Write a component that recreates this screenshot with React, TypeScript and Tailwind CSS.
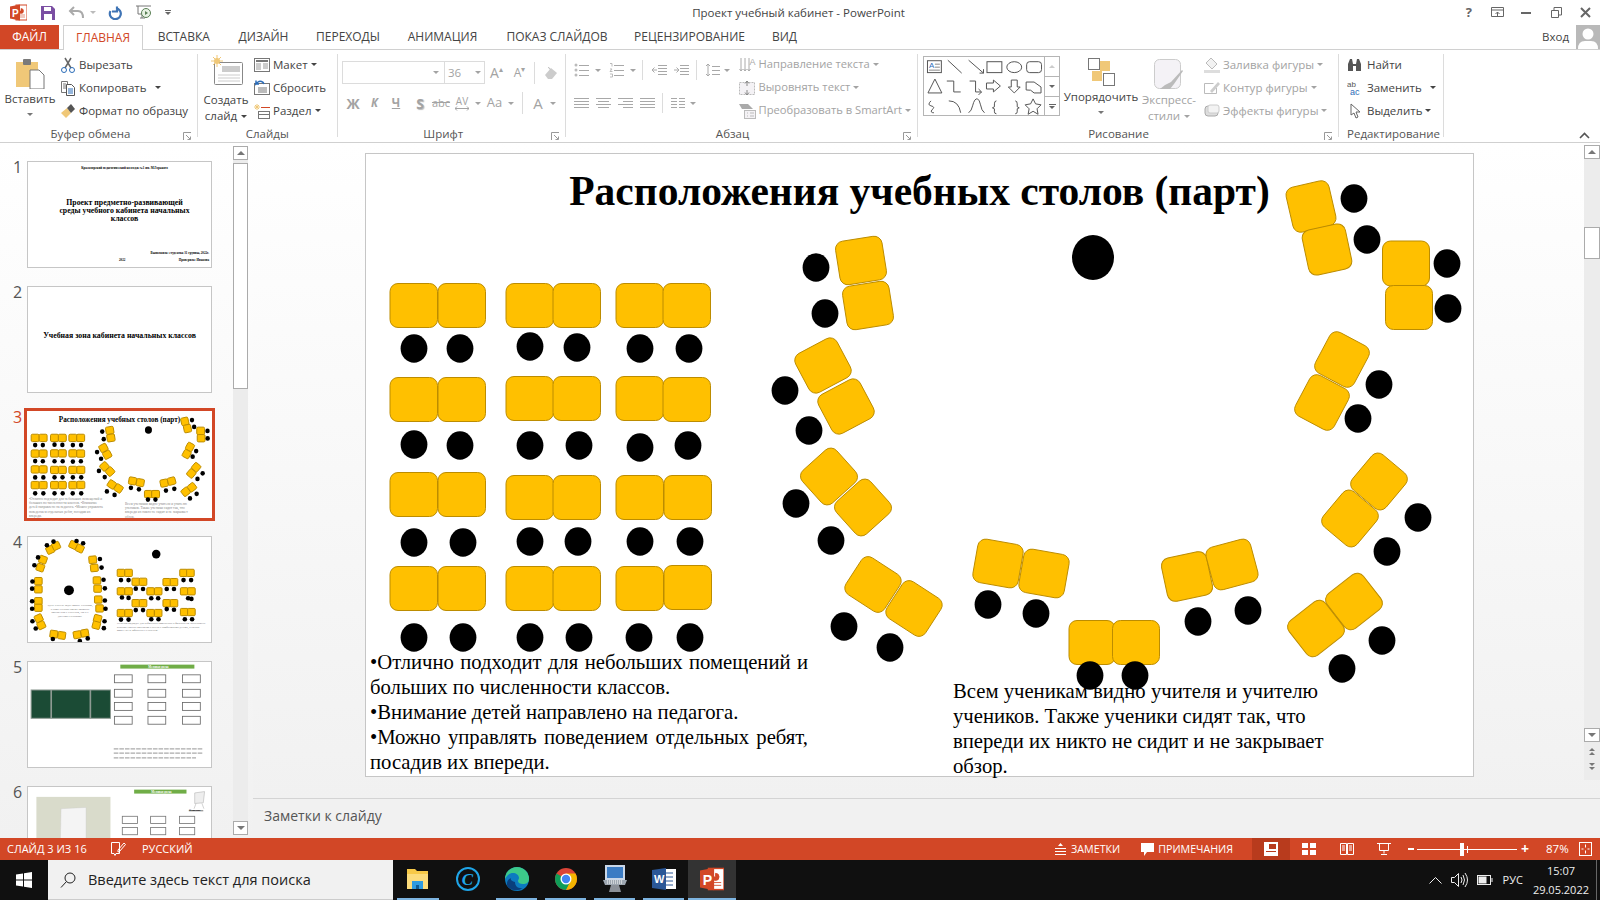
import React from 'react';

const RED = '#D24726';

// [left, top] of the straight desks in the left block
const gridDesks = [
  [390, 283], [438, 283], [506, 283], [553, 283], [616, 283], [663, 283],
  [390, 377], [438, 377], [506, 376], [553, 376], [616, 376], [663, 377],
  [390, 472], [438, 472], [506, 475], [553, 475], [616, 475], [664, 475],
  [390, 566], [438, 566], [506, 566], [553, 566], [616, 566], [664, 565],
];

// [cx, cy, w, h, rotation] of the desks round the circle
const ringDesks = [
  [861, 260, 47, 44, -9], [868, 305, 47, 44, -9],
  [823, 365, 47, 44, -28], [846, 406, 47, 44, -28],
  [829, 476, 46, 44, -42], [863, 507, 46, 44, -42],
  [873, 584, 46, 44, 33], [914, 608, 46, 44, 33],
  [1311, 206, 44, 46, -13], [1327, 249, 44, 46, -12],
  [1406, 263, 47, 45, 0], [1409, 307, 47, 44, 0],
  [1342, 359, 44, 46, 28], [1322, 402, 44, 46, 28],
  [1379, 481, 44, 46, 40], [1350, 518, 44, 46, 40],
  [1354, 601, 46, 44, -38], [1316, 628, 46, 44, -38],
  [998, 563, 46, 44, 10], [1044, 573, 46, 44, 10],
  [1092, 642, 46, 44, 0], [1136, 642, 47, 44, 0],
  [1187, 576, 46, 44, -12], [1232, 564, 46, 44, -15],
];

const seats = [
  [414, 348], [460, 348], [530, 346], [577, 347], [640, 348], [689, 348],
  [414, 444], [460, 445], [530, 445], [579, 445], [640, 447], [688, 445],
  [414, 542], [463, 542], [530, 541], [578, 541], [640, 541], [690, 541],
  [414, 637], [463, 637], [530, 637], [579, 637], [639, 637], [690, 637],
  [816, 267], [825, 313], [785, 390], [809, 430], [796, 503], [831, 540], [844, 626], [890, 647],
  [1354, 198], [1367, 239], [1447, 263], [1448, 308], [1379, 384], [1358, 418], [1418, 517], [1387, 551],
  [1382, 640], [1342, 668], [988, 604], [1036, 613], [1090, 675], [1135, 675], [1198, 621], [1248, 610],
];

function SeatingChart({ className }: { className?: string }) {
  return (
    <svg viewBox="365 152.5 1109 624" className={className}>
      {gridDesks.map(([x, y], i) => (
        <rect key={i} x={x} y={y} width="47.5" height="44" rx="8" fill="#FFC000" stroke="#BC8C00" vectorEffect="non-scaling-stroke" />
      ))}
      {ringDesks.map(([cx, cy, w, h, r], i) => (
        <rect key={i} x={cx - w / 2} y={cy - h / 2} width={w} height={h} rx="8" fill="#FFC000" stroke="#BC8C00" vectorEffect="non-scaling-stroke" transform={`rotate(${r} ${cx} ${cy})`} />
      ))}
      {seats.map(([cx, cy], i) => (
        <ellipse key={i} cx={cx} cy={cy} rx="13.4" ry="14.2" fill="#000" />
      ))}
      <ellipse cx="1093" cy="257" rx="21" ry="22.5" fill="#000" />
    </svg>
  );
}

const thumb4Desks = [
  [67, 39, -25], [85, 27, -25], [137, 24, 25], [157, 35, 25], [196, 69, -5], [201, 94, -5], [45, 69, 20], [37, 93, 20],
  [31, 134, 0], [31, 159, 0], [209, 132, 0], [211, 157, 0], [31, 195, 0], [31, 215, 0], [213, 190, 0], [217, 217, 0],
  [32, 247, -25], [40, 268, -25], [211, 248, 15], [207, 268, 15], [78, 295, 8], [102, 299, 8], [149, 297, -10], [172, 292, -10],
  [282, 109, 0], [305, 109, 0], [327, 136, 0], [349, 136, 0], [421, 137, 0], [443, 137, 0], [472, 109, 0], [493, 109, 0],
  [282, 165, 0], [305, 165, 0], [372, 165, 0], [395, 165, 0], [474, 165, 0], [496, 165, 0], [327, 201, 0], [349, 201, 0],
  [421, 201, 0], [443, 201, 0], [282, 231, 0], [305, 231, 0], [372, 231, 0], [395, 231, 0], [474, 228, 0], [496, 228, 0],
];
const thumb4Seats = [
  [77, 14], [57, 25], [147, 12], [167, 19], [218, 67], [223, 93], [30, 62], [19, 86], [13, 135], [12, 157], [229, 130], [233, 156],
  [12, 195], [12, 218], [233, 193], [235, 218], [13, 256], [23, 278], [232, 256], [230, 277], [75, 310], [157, 316], [181, 308],
  [282, 131], [305, 131], [327, 157], [349, 158], [421, 158], [443, 158], [472, 131], [495, 131], [285, 184], [305, 185],
  [374, 186], [395, 186], [486, 186], [496, 188], [327, 222], [349, 222], [421, 219], [443, 221], [282, 251], [305, 251], [374, 250], [396, 250], [476, 250], [498, 250],
];

function Thumb4Art() {
  return (
    <svg viewBox="0 0 555 319" className="absolute inset-0 h-full w-full">
      {thumb4Desks.map(([cx, cy, r], i) => (
        <rect key={i} x={cx - 11.5} y={cy - 11} width="23" height="22" rx="3" fill="#FFC000" stroke="#BC8C00" vectorEffect="non-scaling-stroke" transform={`rotate(${r} ${cx} ${cy})`} />
      ))}
      {thumb4Seats.map(([cx, cy], i) => (
        <circle key={i} cx={cx} cy={cy} r="7" fill="#000" />
      ))}
      <circle cx="124" cy="162" r="15" fill="#000" />
      <circle cx="389" cy="52" r="13" fill="#000" />
    </svg>
  );
}

const deskFrames5 = [262, 364, 469].flatMap((x) => [39, 83, 123, 165].map((y) => [x, y]));
const deskFrames6 = [286, 372, 460].flatMap((x) => [89, 123, 160].map((y) => [x, y]));

function Thumb5Art() {
  return (
    <svg viewBox="0 0 555 319" className="absolute inset-0 h-full w-full">
      <rect x="280" y="8" width="225" height="12" fill="#70AD47" />
      <rect x="9" y="85" width="241" height="86" fill="#1B4B35" stroke="#8E9A93" strokeWidth="3" />
      <path d="M70 85v86M189 85v86" stroke="#8E9A93" strokeWidth="5" />
      {deskFrames5.map(([x, y], i) => (
        <rect key={i} x={x} y={y} width="54" height="24" fill="#fff" stroke="#666" strokeWidth="2.5" />
      ))}
      <path d="M260 264h272M260 277h272M260 291h250" stroke="#aaa" strokeWidth="4" strokeDasharray="14 3" />
    </svg>
  );
}

function Thumb6Art() {
  return (
    <svg viewBox="0 0 555 319" className="absolute inset-0 h-full w-full">
      <rect x="322" y="8" width="159" height="12" fill="#70AD47" />
      <rect x="25" y="30" width="225" height="289" fill="#D9DBCB" />
      <path d="M100 66l76-4v180H96z" fill="#F4F4F4" stroke="#C9C9C9" />
      <path d="M506 18l30-4-4 34-26 2zM510 50l-6 16M528 50l6 16" fill="#EEE" stroke="#BBB" strokeWidth="2" />
      <rect x="488" y="70" width="44" height="4" fill="#999" />
      {deskFrames6.map(([x, y], i) => (
        <rect key={i} x={x} y={y} width="46" height="22" fill="#fff" stroke="#777" strokeWidth="2.5" />
      ))}
    </svg>
  );
}

function Caret({ className = '' }: { className?: string }) {
  return <span className={`inline-block h-0 w-0 border-x-[3px] border-t-[3px] border-x-transparent border-t-current ${className}`} />;
}

function Ico({ children, w = 16, h = 16 }: { children: React.ReactNode; w?: number; h?: number }) {
  return (
    <svg width={w} height={h} viewBox={`0 0 ${w} ${h}`} className="shrink-0" fill="none">
      {children}
    </svg>
  );
}

function PptLogo({ size = 17 }: { size?: number }) {
  return (
    <svg width={size} height={size} viewBox="0 0 17 17" className="shrink-0">
      <rect x="6" y="1" width="11" height="15" fill="#fff" />
      <path d="M11 4.5a2.5 2.5 0 1 1-2.5 2.5H11zM9 11h6M9 13h6" fill={RED} stroke={RED} strokeWidth=".6" />
      <rect x="6" y="1" width="11" height="15" fill="none" stroke={RED} />
      <path d="M0 2.5L10 .5v16l-10-2z" fill={RED} />
      <text x="2" y="12.5" fontSize="10" fontWeight="700" fill="#fff" fontFamily="Liberation Sans">P</text>
    </svg>
  );
}

function SmallBtn({ icon, label, caret, off, caretGap = 'ml-0' }: { icon: React.ReactNode; label: string; caret?: boolean; off?: boolean; caretGap?: string }) {
  return (
    <div className={`flex h-[23px] items-center gap-[3px] whitespace-nowrap ${off ? 'text-[#a3a3a3]' : 'text-[#444]'}`}>
      {icon}
      <span>{label}</span>
      {caret && <Caret className={caretGap} />}
    </div>
  );
}

function Group({ className, label, labelClass = '', launcher, children }: { className: string; label: string; labelClass?: string; launcher?: boolean; children: React.ReactNode }) {
  return (
    <div className={`relative h-[83px] shrink-0 ${className}`}>
      <div className="flex h-[72px]">{children}</div>
      <div className={`h-4 text-center leading-[16px] whitespace-nowrap text-[#555] ${labelClass}`}>{label}</div>
      {launcher && (
        <svg width="9" height="9" viewBox="0 0 9 9" className="absolute right-[5px] bottom-[-4px]" fill="none" stroke="#999">
          <path d="M.5 8V.5H8M3 3l4 4M7.5 4.5v3h-3" />
        </svg>
      )}
    </div>
  );
}

function FontCell({ className, children }: { className: string; children: React.ReactNode }) {
  return <div className={`flex h-[22px] items-center justify-center ${className}`}>{children}</div>;
}

function Lines({ x = 0, w = 14, ys, color = '#a8a8a8' }: { x?: number; w?: number; ys: number[]; color?: string }) {
  return <path d={ys.map((y) => `M${x} ${y}.5h${w}`).join('')} stroke={color} />;
}

function ShapeGallery() {
  const c = '#555';
  return (
    <div className="mt-[2px] flex h-[60px] w-[137px] border border-[#b5b5b5]">
      <svg width="121" height="58" viewBox="0 0 121 58" fill="none" stroke={c} className="border-r border-[#b5b5b5]">
        <rect x="3.5" y="3.5" width="14" height="12" />
        <text x="5" y="11" fontSize="8" fill="#2B6CB8" stroke="none" fontFamily="Liberation Sans">A</text>
        <path d="M11 7h5M11 10h5M5 13h11" stroke="#888" />
        <path d="M24 3l14 13M45 3l15 13m-4 0h4v-4" />
        <rect x="63.5" y="4.5" width="15" height="11" />
        <ellipse cx="91" cy="10" rx="7.5" ry="5.5" />
        <rect x="103.5" y="4.5" width="15" height="11" rx="3" />
        <path d="M4 36l7-14 7 14zM23 24h7v11h7M46 24h6v11h6m-3-3l3 3-3 3M63 26h7v-3l7 6-7 6v-3h-7zM88 23h6v7h3l-6 6-6-6h3zM103 25h8l7 5v6h-7q-3-4-8-3z" />
        <path d="M7 44q-4 4 0 5 5 1 1 4-2 3 2 3M25 44q10 0 12 12M45 56q3-2 4-7 2-8 5-7 2 1 3 6 1 6 4 8M73 44q-2 0-2 3v3l-2 1 2 1v3q0 2 2 2M92 44q2 0 2 3v3l2 1-2 1v3q0 2-2 2M110 42l2.5 5 5.500 1-4 4 1 5.500-5-3-5 3 1-5.500-4-4 5.500-1z" />
      </svg>
      <div className="flex w-[14px] flex-col text-[#666]">
        <div className="flex h-[20px] items-center justify-center border-b border-[#b5b5b5] text-[#ccc]"><Caret className="rotate-180" /></div>
        <div className="flex h-[20px] items-center justify-center border-b border-[#b5b5b5]"><Caret /></div>
        <div className="flex flex-1 flex-col items-center justify-center gap-[1px]"><span className="h-px w-[7px] bg-current" /><Caret /></div>
      </div>
    </div>
  );
}

function Ribbon() {
  return (
    <div className="flex h-[93px] shrink-0 border-b border-[#d0d0d0] bg-white pt-1 text-[11.500px]">
      <Group className="w-[198px] border-r border-[#dcdcdc]" label="Буфер обмена" labelClass="pr-[16px]" launcher>
        <div className="flex w-[60px] flex-col items-center text-[#444]">
          <svg width="30" height="31" viewBox="0 0 30 31" className="mt-1" fill="none">
            <path d="M1 4h22v25H1z" fill="#F0C878" />
            <rect x="8" y="1" width="8" height="6" rx="1" fill="#7a7a7a" />
            <path d="M15 12h9l5 5v14H15z" fill="#fff" stroke="#777" />
          </svg>
          <span className="mt-[2px] leading-[16px]">Вставить</span>
          <Caret className="mt-[6px] text-[#777]" />
        </div>
        <div className="-mt-px flex flex-col">
          <SmallBtn
            label="Вырезать"
            icon={<Ico><path d="M5 1l6 10M11 1L5 11" stroke="#666" strokeWidth="1.5" /><circle cx="4" cy="13" r="2.500" stroke="#2B6CB8" /><circle cx="12" cy="13" r="2.500" stroke="#2B6CB8" /></Ico>}
          />
          <SmallBtn
            label="Копировать"
            caret
            caretGap="ml-[5px]"
            icon={<Ico><path d="M1.500 1.500h6v11h-6zM3 4h3M3 6h3M3 8h3" stroke="#777" /><path d="M6.500 4.500h5l3 3v8h-8z" fill="#fff" stroke="#555" /><path d="M8 9h5M8 11h5M8 13h5" stroke="#2B6CB8" /></Ico>}
          />
          <SmallBtn
            label="Формат по образцу"
            icon={<Ico><path d="M1 10l6-5 4 5-5 5z" fill="#F0C878" /><path d="M7 5l4 5 4-4-4-5z" fill="#555" /></Ico>}
          />
        </div>
      </Group>

      <Group className="w-[139.5px] border-r border-[#dcdcdc]" label="Слайды">
        <div className="flex w-[56px] flex-col items-center text-[#444]">
          <svg width="32" height="30" viewBox="0 0 32 30" className="mt-[1px] ml-[2px]" fill="none">
            <rect x="3.500" y="7.500" width="28" height="22" rx="1" fill="#fff" stroke="#888" />
            <rect x="11" y="11" width="18" height="6" fill="#ccc" />
            <path d="M7 20h22M7 23h22M7 26h22" stroke="#ccc" />
            <circle cx="6" cy="6" r="3" fill="#F0C878" />
            <path d="M6 0v12M0 6h12M2 2l8 8M10 2l-8 8" stroke="#F0C878" />
          </svg>
          <span className="mt-[7px] leading-[16px]">Создать</span>
          <span className="flex items-center gap-1 leading-[16px]">слайд<Caret /></span>
        </div>
        <div className="-mt-px flex flex-col">
          <SmallBtn
            label="Макет"
            caret
            icon={<Ico><rect x=".5" y="1.500" width="15" height="13" fill="#fff" stroke="#777" /><path d="M2 4h12" stroke="#777" strokeWidth="2" /><rect x="2" y="6" width="5" height="7" fill="#ccc" /><path d="M9 7h5M9 9h5M9 11h5" stroke="#999" /></Ico>}
          />
          <SmallBtn
            label="Сбросить"
            icon={<Ico><rect x=".5" y="3.500" width="15" height="11" fill="#fff" stroke="#777" /><path d="M4 7h9v6H4z" fill="#bbb" /><path d="M10 4a4 4 0 0 0-6-2l-2 2V.500M1 4h4" stroke="#2B6CB8" strokeWidth="1.500" /></Ico>}
          />
          <SmallBtn
            label="Раздел"
            caret
            icon={<Ico><path d="M3 1v6M0 4h6M1 2l4 4M5 2L1 6" stroke="#F0C878" /><path d="M7 4.500h9" stroke={RED} /><rect x="4.500" y="8.500" width="11" height="7" fill="#fff" stroke="#777" /><path d="M4 11.500h12" stroke="#777" /></Ico>}
          />
        </div>
      </Group>

      <Group className="w-[228px] border-r border-[#dcdcdc] pl-[4.500px]" label="Шрифт" labelClass="pr-[20px]" launcher>
        <div className="flex flex-col text-[#a3a3a3]">
          <div className="mt-[7px] flex h-[23px] items-center">
            <div className="flex h-[23px] w-[103px] items-center justify-end border border-[#dcdcdc] pr-[5px]"><Caret /></div>
            <div className="flex h-[23px] w-[40px] items-center justify-between border border-l-0 border-[#dcdcdc] px-[3px]"><span>36</span><Caret /></div>
            <FontCell className="w-[23px] text-[14px]">A<sup className="text-[8px]">▴</sup></FontCell>
            <FontCell className="w-[23px] text-[12px]">A<sup className="text-[8px]">▾</sup></FontCell>
            <span className="ml-[3px] h-[22px] w-px bg-[#dcdcdc]" />
            <div className="ml-2">
              <Ico><path d="M2 10l6-7 6 5-5 6H5z" fill="#ccc" /><path d="M5 2.500a2 2 0 0 1 2 2" stroke="#bbb" /></Ico>
            </div>
          </div>
          <div className="mt-[8px] flex h-[22px] items-center font-bold">
            <FontCell className="w-[22px] text-[14px]">Ж</FontCell>
            <FontCell className="w-[21px] italic">К</FontCell>
            <FontCell className="w-[22px] underline">Ч</FontCell>
            <FontCell className="ml-[2px] w-[22px] text-[14px] [text-shadow:1px_1px_1px_#bbb]">S</FontCell>
            <FontCell className="w-[20px] text-[11px] font-normal line-through">abc</FontCell>
            <FontCell className="w-[22px] font-normal">
              <span className="flex flex-col items-center text-[10px] leading-[10px]">
                AV
                <svg width="14" height="5" viewBox="0 0 14 5" fill="none" stroke="#a3a3a3"><path d="M0 2.500h14M2 .5L0 2.500l2 2M12 .5l2 2-2 2" /></svg>
              </span>
            </FontCell>
            <FontCell className="w-[10px]"><Caret /></FontCell>
            <FontCell className="w-[23px] text-[13px] font-normal">Aa</FontCell>
            <FontCell className="w-[10px]"><Caret /></FontCell>
            <span className="ml-[6px] h-[22px] w-px bg-[#dcdcdc]" />
            <FontCell className="ml-[5px] w-[20px] text-[15px] font-normal">A</FontCell>
            <FontCell className="w-[10px]"><Caret /></FontCell>
          </div>
        </div>
      </Group>

      <Group className="w-[352px] border-r border-[#dcdcdc]" label="Абзац" labelClass="pr-[17px]" launcher>
        <div className="flex w-[173px] flex-col pl-2 text-[#a3a3a3]">
          <div className="mt-[5px] flex h-[22px] items-center">
            <Ico w={15}><circle cx="2" cy="3" r="1.500" fill="#bbb" /><circle cx="2" cy="8" r="1.500" fill="#bbb" /><circle cx="2" cy="13" r="1.500" fill="#bbb" /><Lines x={5} w={10} ys={[3, 8, 13]} /></Ico>
            <Caret className="ml-[6px]" />
            <div className="ml-[8px]"><Ico w={15}><path d="M1 1.500h2v3M1 7h2L1 9.500h2.500M1 12h2.500v3H1" stroke="#bbb" /><Lines x={5} w={10} ys={[3, 8, 13]} /></Ico></div>
            <Caret className="ml-[6px]" />
            <span className="ml-[6px] h-[20px] w-px bg-[#dcdcdc]" />
            <div className="ml-2"><Ico><Lines x={7} w={9} ys={[3, 6, 9, 12]} /><path d="M6 8H1m2.500-2.500L1 8l2.500 2.500" stroke="#aaa" /></Ico></div>
            <div className="ml-[6px]"><Ico><Lines x={7} w={9} ys={[3, 6, 9, 12]} /><path d="M1 8h5M3.500 5.500L6 8l-2.500 2.500" stroke="#aaa" /></Ico></div>
            <span className="ml-[7px] h-[20px] w-px bg-[#dcdcdc]" />
            <div className="ml-2"><Ico w={15}><path d="M3 2v12M1 4l2-2 2 2M1 12l2 2 2-2" stroke="#aaa" /><Lines x={7} w={8} ys={[4, 8, 12]} /></Ico></div>
            <Caret className="ml-[4px]" />
          </div>
          <div className="mt-[11px] flex h-[22px] items-center">
            <Ico w={15}><Lines w={15} ys={[3, 6, 9, 12]} /></Ico>
            <div className="ml-[7px]"><Ico w={15}><Lines x={0} w={15} ys={[3, 9]} /><Lines x={2} w={11} ys={[6, 12]} /></Ico></div>
            <div className="ml-[7px]"><Ico w={15}><Lines x={0} w={15} ys={[3, 9]} /><Lines x={5} w={10} ys={[6, 12]} /></Ico></div>
            <div className="ml-[7px]"><Ico w={15}><Lines w={15} ys={[3, 6, 9, 12]} /></Ico></div>
            <span className="ml-[7px] h-[20px] w-px bg-[#dcdcdc]" />
            <div className="ml-2"><Ico w={14}><Lines w={6} ys={[3, 6, 9, 12]} /><Lines x={8} w={6} ys={[3, 6, 9, 12]} /></Ico></div>
            <Caret className="ml-[5px]" />
          </div>
        </div>
        <div className="-mt-px flex flex-col text-[11.200px]">
          <SmallBtn off caret label="Направление текста" icon={<Ico w={17}><path d="M2 1v13M6 1v13M10 1v13M.500 12L2 14l1.500-2M4.500 12L6 14l1.500-2M8.500 12l1.500 2 1.500-2" stroke="#aaa" /><text x="10.500" y="8" fontSize="9" fill="#aaa" fontFamily="Liberation Sans">A</text></Ico>} />
          <SmallBtn off caret label="Выровнять текст" icon={<Ico w={17}><rect x=".5" y="2.500" width="15" height="12" stroke="#bbb" strokeDasharray="2 1" fill="#f4f2f5" /><path d="M8 1v5M6 3.500L8 1l2 2.500M8 15v-5M6 12.500L8 15l2-2.500" stroke="#888" /></Ico>} />
          <SmallBtn off caret label="Преобразовать в SmartArt" icon={<Ico w={17}><path d="M0 1h9l5 5H3z" fill="#aaa" /><rect x="5.500" y="7.500" width="11" height="8" fill="#f4f2f5" stroke="#bbb" /><path d="M8 10h1M8 13h1M11 10h4M11 13h4" stroke="#bbb" /></Ico>} />
        </div>
      </Group>

      <Group className="w-[421.5px] border-r border-[#dcdcdc] pl-[5.500px]" label="Рисование" labelClass="pr-[24px]" launcher>
        <ShapeGallery />
        <div className="ml-[3px] flex w-[76px] flex-col items-center text-[#444]">
          <svg width="27" height="28" viewBox="0 0 27 28" className="mt-[4px]" fill="none">
            <rect x=".5" y=".5" width="11" height="11" fill="#fff" stroke="#777" />
            <rect x="12" y="3" width="10" height="10" fill="#F0C878" />
            <rect x="4" y="13" width="10" height="10" fill="#F0C878" />
            <rect x="15.500" y="15.500" width="11" height="12" fill="#fff" stroke="#777" />
          </svg>
          <span className="mt-[3px] leading-[16px]">Упорядочить</span>
          <Caret className="mt-[6px] text-[#777]" />
        </div>
        <div className="ml-[1px] flex w-[58px] flex-col items-center text-[#a3a3a3]">
          <svg width="30" height="31" viewBox="0 0 30 31" className="mt-[5px]" fill="none">
            <rect x=".5" y=".5" width="26" height="29" rx="5" fill="#F4F2F6" stroke="#ccc" />
            <path d="M28 11L17 23l-6 3-5 4h10l4-5 9-13z" fill="#bbb" />
          </svg>
          <span className="mt-[2px] leading-[16px] whitespace-nowrap">Экспресс-</span>
          <span className="flex items-center gap-1 leading-[16px]">стили<Caret /></span>
        </div>
        <div className="-mt-px ml-[6px] flex flex-col">
          <SmallBtn off caret label="Заливка фигуры" icon={<Ico><path d="M7 1l6 6-5 5-6-6z" fill="#f2f2f2" stroke="#bbb" /><rect x="0" y="13" width="16" height="3" fill="#ddd" /></Ico>} />
          <SmallBtn off caret label="Контур фигуры" icon={<Ico><path d="M.5 3.500h9M.5 3.500v10h12V8" stroke="#bbb" /><path d="M6 11l8-9 2 2-8 9z" fill="#ccc" /></Ico>} />
          <SmallBtn off caret label="Эффекты фигуры" icon={<Ico><rect x="1" y="3" width="13" height="10" rx="3" fill="#ddd" stroke="#aaa" /><rect x="4" y="2" width="11" height="8" rx="2" fill="#f3f3f3" stroke="#ccc" /></Ico>} />
        </div>
      </Group>

      <Group className="w-[104.5px] border-r border-[#dcdcdc] pl-2" label="Редактирование" labelClass="pr-[8px]">
        <div className="-mt-px flex flex-col">
          <SmallBtn label="Найти" icon={<Ico w={17}><path d="M1 14V7l2-5h2l1 5h3l1-5h2l2 5v7H9V9H6v5z" fill="#555" /></Ico>} />
          <SmallBtn
            label="Заменить"
            caret
            caretGap="ml-[5px]"
            icon={<Ico w={17}><text x="0" y="7" fontSize="8" fill="#555" fontFamily="Liberation Sans">ab</text><text x="3" y="15" fontSize="9" fill="#2B6CB8" fontFamily="Liberation Sans">ac</text></Ico>}
          />
          <SmallBtn label="Выделить" caret icon={<Ico w={17}><path d="M4 1v11l3-2 2 5 2-1-2-5h4z" fill="#fff" stroke="#666" /></Ico>} />
        </div>
      </Group>

      <div className="flex flex-1 items-end justify-end pr-[10px] pb-[3px] text-[#555]">
        <svg width="11" height="7" viewBox="0 0 11 7" fill="none" stroke="currentColor" strokeWidth="1.600"><path d="M1 6l4.500-4.500L10 6" /></svg>
      </div>
    </div>
  );
}

const tabs = [
  ['ВСТАВКА', 'w-[81.5px]'],
  ['ДИЗАЙН', 'w-[78px]'],
  ['ПЕРЕХОДЫ', 'w-[91px]'],
  ['АНИМАЦИЯ', 'w-[98px]'],
  ['ПОКАЗ СЛАЙДОВ', 'w-[131px]'],
  ['РЕЦЕНЗИРОВАНИЕ', 'w-[134px]'],
  ['ВИД', 'w-[56px]'],
];

function TitleBar() {
  return (
    <div className="flex h-[25px] shrink-0 items-center bg-white text-[12px] text-[#444]">
      <div className="flex flex-1 items-center">
        <div className="ml-[10px]"><PptLogo /></div>
        <svg width="14" height="14" viewBox="0 0 14 14" className="ml-[14px]">
          <path d="M0 0h11l3 3v11H0z" fill="#7B4FA3" />
          <rect x="3" y="1" width="7" height="4" fill="#fff" />
          <rect x="3" y="8" width="8" height="6" fill="#fff" />
        </svg>
        <svg width="17" height="13" viewBox="0 0 17 13" className="ml-[13px]" fill="none" stroke="#aaa" strokeWidth="2">
          <path d="M6 1L2 5l4 4M2 5h8q5 0 5 7" />
        </svg>
        <Caret className="ml-[5px] text-[#bbb]" />
        <svg width="14" height="14" viewBox="0 0 14 14" className="ml-[12px]" fill="none" stroke="#3F74B5" strokeWidth="2.200">
          <path d="M8 2.200A5.500 5.500 0 1 1 2.500 5M9 .500v5H4" />
        </svg>
        <svg width="16" height="15" viewBox="0 0 16 15" className="ml-[14px]" fill="none">
          <path d="M0 1h15M2 1v8h5M4 13h5M6 9v4" stroke="#777" />
          <circle cx="10" cy="8" r="4.500" fill="#E8F2E4" stroke="#5A7F55" />
          <path d="M9 6v4l3-2z" fill="#5A7F55" />
        </svg>
        <span className="ml-[13px] flex flex-col items-center gap-[1px] text-[#666]"><span className="h-px w-[6px] bg-current" /><Caret /></span>
      </div>
      <span className="pt-px pr-[3px] text-[11.500px]">Проект учебный кабинет - PowerPoint</span>
      <div className="flex flex-1 items-center justify-end text-[#666]">
        <span className="mr-[18.500px] text-[13px] font-bold">?</span>
        <svg width="14" height="11" viewBox="0 0 14 11" className="mr-[16.500px]" fill="none" stroke="#666"><path d="M.5.5h12v9H.5zM.5 3h12M6.500 9V5M4.500 7l2-2 2 2" /></svg>
        <span className="mr-[19.500px] h-[2px] w-[10px] bg-current" />
        <svg width="11" height="11" viewBox="0 0 11 11" className="mr-[18px]" fill="none" stroke="#666"><path d="M.5 3.500h7v7h-7zM3 3V.5h7.500V8H8" /></svg>
        <svg width="11" height="11" viewBox="0 0 11 11" className="mr-[9.500px]" fill="none" stroke="#666" strokeWidth="2"><path d="M1 1l9 9M10 1l-9 9" /></svg>
      </div>
    </div>
  );
}

function TabRow() {
  return (
    <div className="flex h-[25px] shrink-0 items-stretch border-b border-[#d0d0d0] bg-white text-[12px] text-[#444]">
      <div className="flex w-[59px] items-center justify-center text-white" style={{ backgroundColor: RED }}>ФАЙЛ</div>
      <div className="relative ml-1 flex h-[25px] w-[80px] items-center justify-center border-x border-t border-[#d0d0d0] bg-white" style={{ color: RED }}>ГЛАВНАЯ</div>
      {tabs.map(([name, width]) => (
        <div key={name} className={`flex items-center justify-center whitespace-nowrap ${width}`}>{name}</div>
      ))}
      <div className="flex flex-1 items-center justify-end">
        <span className="mr-[7px] text-[11.500px]">Вход</span>
        <svg width="24" height="24" viewBox="0 0 24 24">
          <rect width="24" height="24" fill="#B9B9B9" />
          <circle cx="12" cy="9" r="5.500" fill="#fff" />
          <path d="M2 24q0-8 7-8h6q7 0 7 8z" fill="#fff" />
        </svg>
      </div>
    </div>
  );
}

function ThumbFrame({ n, active, children }: { n: number; active?: boolean; children?: React.ReactNode }) {
  return (
    <div className="flex h-[107px] shrink-0">
      <span className="-mt-[4px] w-[27px] pl-[13px] text-[16px] leading-[20px]" style={{ color: active ? RED : '#555' }}>{n}</span>
      <div className={`relative h-[107px] w-[185px] shrink-0 overflow-hidden bg-white [font-family:'Liberation_Serif',serif] text-black ${active ? '-m-[3px] box-content border-[3px] border-[#D24726]' : 'border border-[#c6c6c6]'}`}>
        {children}
      </div>
    </div>
  );
}

function ThumbPanel() {
  return (
    <div className="flex w-[253px] shrink-0 overflow-hidden bg-gradient-to-b from-white to-[#f1f1f1]">
      <div className="flex w-[233px] shrink-0 flex-col gap-[18px] pt-[18px]">
        <ThumbFrame n={1}>
          <div className="pt-[4px] pl-[10px] text-center text-[3.200px] font-bold">Красноярский педагогический колледж №1 им. М.Горького</div>
          <div className="mt-[28px] pl-[10px] text-center text-[7.800px] leading-[8.300px] font-bold whitespace-nowrap">
            Проект предметно-развивающей<br />среды учебного кабинета начальных<br />классов
          </div>
          <div className="absolute right-[2px] bottom-[11px] text-[3.200px] font-bold">Выполнила: студентка 31 группы, 2022г.</div>
          <div className="absolute right-[2px] bottom-[4px] text-[3.200px] font-bold">Проверила: Иванова</div>
          <div className="absolute bottom-[4px] left-[91px] text-[3.200px] font-bold">2022</div>
        </ThumbFrame>
        <ThumbFrame n={2}>
          <div className="flex h-full items-center justify-center pb-[8px] text-[7.800px] font-bold whitespace-nowrap">Учебная зона кабинета начальных классов</div>
        </ThumbFrame>
        <ThumbFrame n={3} active>
          <SeatingChart className="absolute inset-0 h-full w-full" />
          <div className="relative pt-[4px] text-center text-[7.200px] font-bold">Расположения учебных столов (парт)</div>
          <div className="absolute top-[86px] left-[2px] w-[75px] text-[3.500px] leading-[4.200px] text-[#888]">•Отлично подходит для небольших помещений и больших по численности классов. •Внимание детей направлено на педагога. •Можно управлять поведением отдельных ребят, посадив их впереди.</div>
          <div className="absolute top-[91px] left-[98px] w-[65px] text-[3.500px] leading-[4.200px] text-[#888]">Всем ученикам видно учителя и учителю учеников. Также ученики сидят так, что впереди их никто не сидит и не закрывает обзор.</div>
        </ThumbFrame>
        <ThumbFrame n={4}>
          <Thumb4Art />
          <div className="absolute top-[67px] left-[19px] w-[46px] text-center text-[2.800px] leading-[3.500px] text-[#666]">Здесь учитель ходит вокруг учеников, и сами ученики имеют хороший контакт как с учителем, так и с другими учениками.</div>
          <div className="absolute top-[85px] left-[89px] w-[90px] text-[2.800px] leading-[3.500px] text-[#666]">Отлично подходит для небольших помещений и больших по численности классов. Больше контактов учителя с проблемными детьми, а группа может легче общаться с учителем.</div>
        </ThumbFrame>
        <ThumbFrame n={5}>
          <Thumb5Art />
          <div className="absolute top-[2.500px] left-[93px] w-[75px] text-center text-[3px] leading-[4px] font-bold text-white">Меловая доска</div>
        </ThumbFrame>
        <ThumbFrame n={6}>
          <Thumb6Art />
          <div className="absolute top-[2.500px] left-[107px] w-[53px] text-center text-[3px] leading-[4px] font-bold text-white">Меловая доска</div>
          <div className="absolute top-[22px] left-[161px] text-[2.500px] font-bold">Флипчарт</div>
        </ThumbFrame>
      </div>
      <div className="mt-[3px] mb-[3px] flex w-[15px] shrink-0 flex-col bg-[#ececec]">
        <ScrollBtn up />
        <div className="mt-[3px] h-[226px] border border-[#ababab] bg-white" />
        <div className="flex-1" />
        <ScrollBtn />
      </div>
    </div>
  );
}

function ScrollBtn({ up }: { up?: boolean }) {
  return (
    <div className="flex h-[14px] shrink-0 items-center justify-center border border-[#ababab] bg-white text-[#777]">
      <span className={`h-0 w-0 border-x-[4px] border-t-[4px] border-x-transparent border-t-current ${up ? 'rotate-180' : ''}`} />
    </div>
  );
}

function SlideCanvas() {
  return (
    <div className="relative h-[624px] w-[1109px] shrink-0 border border-[#c6c6c6] bg-white [font-family:'Liberation_Serif',serif] text-black">
      <div className="pt-[12px] text-center text-[41.500px] leading-[50px] font-bold">Расположения учебных столов (парт)</div>
      <div className="absolute top-[496px] left-[4px] w-[438px] text-justify text-[20.700px] leading-[25px]">
        <p>•Отлично подходит для небольших помещений и больших по численности классов.</p>
        <p>•Внимание детей направлено на педагога.</p>
        <p>•Можно управлять поведением отдельных ребят, посадив их впереди.</p>
      </div>
      <div className="absolute top-[525px] left-[587px] w-[390px] text-[20.700px] leading-[25px]">
        Всем ученикам видно учителя и учителю учеников. Также ученики сидят так, что впереди их никто не сидит и не закрывает обзор.
      </div>
      <SeatingChart className="pointer-events-none absolute -top-px -left-px h-[624px] w-[1109px]" />
    </div>
  );
}

function Editor() {
  return (
    <div className="flex min-w-0 flex-1 flex-col">
      <div className="flex h-[655px] shrink-0 bg-gradient-to-b from-white to-[#f1f1f1]">
        <div className="flex-1 pt-[10px] pl-[112px]">
          <SlideCanvas />
        </div>
        <div className="mt-[2px] flex h-[635px] w-[16px] shrink-0 flex-col bg-[#ececec]">
          <ScrollBtn up />
          <div className="mt-[68px] h-[32px] shrink-0 border border-[#ababab] bg-white" />
          <div className="h-[469px] shrink-0" />
          <ScrollBtn />
          <div className="mt-[6px] flex flex-col items-center gap-[8px] text-[#777]">
            <span className="flex flex-col items-center gap-[1px]"><Caret className="rotate-180" /><Caret className="rotate-180" /></span>
            <span className="flex flex-col items-center gap-[1px]"><Caret /><Caret /></span>
          </div>
        </div>
      </div>
      <div className="flex flex-1 items-center border-t border-[#d4d4d4] bg-[#f1f1f1] pb-[7px] pl-[11px] text-[14px] text-[#555]">Заметки к слайду</div>
    </div>
  );
}

function StatusBar() {
  return (
    <div className="flex h-[22px] shrink-0 items-center text-[11px] text-white" style={{ backgroundColor: RED }}>
      <span className="ml-[7px] w-[90px]">СЛАЙД 3 ИЗ 16</span>
      <svg width="15" height="16" viewBox="0 0 15 16" className="ml-[14px]" fill="none" stroke="#fff"><path d="M.5 1.500h8v11H5l-1 2-1-2H.5zM7 9l6-7 1.500 1.500-6 7L7 11z" /></svg>
      <span className="ml-[16px]">РУССКИЙ</span>
      <div className="flex flex-1 items-center justify-end text-[10.700px]">
        <svg width="11" height="13" viewBox="0 0 11 13" fill="#fff"><path d="M5.500 0L8 3H3zM0 5h11v1H0zM0 8h11v1H0zM0 11h11v1H0z" /></svg>
        <span className="mr-[21px] ml-[5px]">ЗАМЕТКИ</span>
        <svg width="13" height="13" viewBox="0 0 13 13" fill="#fff"><path d="M0 0h13v9H6l-3 4V9H0z" /></svg>
        <span className="mr-[19px] ml-[4px]">ПРИМЕЧАНИЯ</span>
        <div className="flex h-[22px] w-[38px] items-center justify-center bg-[#B83B1D]">
          <svg width="14" height="14" viewBox="0 0 14 14"><path d="M0 0h14v14H0z" fill="#fff" /><path d="M5 2h7v5H5zM2 9h10v1H2z" fill="#B83B1D" /></svg>
        </div>
        <div className="flex w-[38px] justify-center">
          <svg width="14" height="12" viewBox="0 0 14 12" fill="#fff"><path d="M0 0h6v5H0zM8 0h6v5H8zM0 7h6v5H0zM8 7h6v5H8z" /></svg>
        </div>
        <div className="flex w-[37px] justify-center">
          <svg width="14" height="14" viewBox="0 0 14 14" fill="none" stroke="#fff"><path d="M.5 1.500h6v11h-6zM7.500 1.500h6v11h-6zM2 4h3M2 6h3M2 8h3M9 4h3M9 6h3M9 8h3" /></svg>
        </div>
        <div className="flex w-[38px] justify-center">
          <svg width="14" height="14" viewBox="0 0 14 14" fill="none" stroke="#fff"><path d="M0 1.500h14M2.500 1.500v7h9v-7M7 8.500v3M4 12.500h6" /></svg>
        </div>
        <div className="ml-[5px] flex h-[22px] w-[121px] items-center">
          <span className="h-[2px] w-[6px] bg-white" />
          <div className="relative ml-[3px] h-px w-[100px] bg-white">
            <span className="absolute top-[-6px] left-[43px] h-[13px] w-[4px] bg-white" />
            <span className="absolute top-[-3px] left-[50px] h-[7px] w-px bg-white" />
          </div>
          <span className="ml-[4px] text-[14px] leading-none font-bold">+</span>
        </div>
        <span className="ml-[17px] w-[28px] text-[11.500px]">87%</span>
        <svg width="13" height="14" viewBox="0 0 13 14" className="mr-[8px] ml-[5px]" fill="none" stroke="#fff"><rect x=".5" y=".5" width="12" height="13" /><path d="M6.500 2.500v3M6.500 8.500v3M2.500 7h2M8.500 7h2" /></svg>
      </div>
    </div>
  );
}

function WinFolder() {
  return (
    <svg width="22" height="24" viewBox="0 0 22 24">
      <path d="M0 2h8l2 2h11v18H0z" fill="#F7C948" />
      <path d="M0 7h21v15H0z" fill="#FCDC7C" />
      <path d="M5 14h11v8H5z" fill="#2F9BE0" />
      <path d="M9 18h3v4H9z" fill="#0E5A94" />
    </svg>
  );
}

function ChromeIcon() {
  return (
    <svg width="24" height="24" viewBox="0 0 24 24">
      <circle cx="12" cy="12" r="11" fill="#DB4437" />
      <path d="M12 12L2.500 6.500A11 11 0 0 0 12 23l5.500-9.500z" fill="#0F9D58" />
      <path d="M12 12l5.500 0L12 23A11 11 0 0 0 21.500 6.500H12z" fill="#F4B400" />
      <circle cx="12" cy="12" r="5.500" fill="#fff" />
      <circle cx="12" cy="12" r="4.200" fill="#4285F4" />
    </svg>
  );
}

function EdgeIcon() {
  return (
    <svg width="24" height="24" viewBox="0 0 24 24">
      <circle cx="12" cy="12" r="12" fill="#0C7BC0" />
      <path d="M12 0a12 12 0 0 1 12 12c0 4-3 5-6 5s-5-1-5-3c0-1 1-2 1-3 0-3-3-5-6-5-3 0-6 2-8 6A12 12 0 0 1 12 0z" fill="#3CC98A" />
      <path d="M10 15c0 4 3 7 8 6a12 12 0 0 1-14 0c-3-2-3-8 2-10-1 2 1 3 4 4z" fill="#0A3F7C" />
    </svg>
  );
}

function Taskbar() {
  const dock = [
    { w: 'w-[50px]', on: true, el: <WinFolder /> },
    {
      w: 'w-[49px]',
      el: (
        <span className="flex h-[24px] w-[24px] items-center justify-center rounded-full border-2 border-[#1FA5E8] [font-family:'Liberation_Serif',serif] text-[17px] leading-none font-bold text-[#1FA5E8] italic">C</span>
      ),
    },
    { w: 'w-[49px]', on: true, el: <EdgeIcon /> },
    { w: 'w-[49px]', on: true, el: <ChromeIcon /> },
    {
      w: 'w-[49px]',
      on: true,
      el: (
        <svg width="24" height="28" viewBox="0 0 24 28">
          <path d="M2 0h20v15H2z" fill="#C9D7E8" />
          <path d="M4 2h16v11H4z" fill="#3B7CC4" />
          <path d="M0 15h24l-2 5H2z" fill="#9EA7B1" />
          <path d="M4 16h16M4 18h16" stroke="#fff" strokeDasharray="1 1" />
          <path d="M8 20h8l2 7H6z" fill="#8C9199" />
        </svg>
      ),
    },
    {
      w: 'w-[49px]',
      on: true,
      el: (
        <svg width="24" height="24" viewBox="0 0 24 24">
          <path d="M8 2h16v20H8z" fill="#fff" />
          <path d="M13 6h8M13 10h8M13 14h8M13 18h8" stroke="#2B5797" />
          <path d="M0 3l14-2v22L0 21z" fill="#2B5797" />
          <text x="2" y="16" fontSize="11" fontWeight="700" fill="#fff" fontFamily="Liberation Sans">W</text>
        </svg>
      ),
    },
    { w: 'w-[48px]', on: true, active: true, el: <PptLogo size={24} /> },
  ];
  return (
    <div className="flex h-[40px] shrink-0 items-stretch bg-[#101010] text-white">
      <div className="flex w-[48px] items-center justify-center">
        <svg width="16" height="16" viewBox="0 0 16 16" fill="#fff"><path d="M0 2.500l7-1v6H0zM8 1.300l8-1.300v7.500H8zM0 8.500h7v6l-7-1zM8 8.500h8V16l-8-1.300z" /></svg>
      </div>
      <div className="flex w-[345px] items-center border-b border-[#ccc] bg-[#f1f1f1] pl-[12px] text-[#222]">
        <svg width="16" height="16" viewBox="0 0 16 16" fill="none" stroke="#222"><circle cx="10" cy="6" r="5" /><path d="M6.500 9.500L1 15.500" /></svg>
        <span className="ml-[12px] pt-px text-[14.500px]">Введите здесь текст для поиска</span>
      </div>
      <div className="flex">
        {dock.map((item, i) => (
          <div key={i} className={`flex items-center justify-center ${item.w} ${item.active ? 'bg-[#333]' : ''}`}>
            <div className={`flex h-full w-full items-center justify-center border-b-2 ${item.on ? 'border-[#7db4e0]' : 'border-transparent'} ${item.active ? '' : 'mx-[4px]'}`}>
              {item.el}
            </div>
          </div>
        ))}
      </div>
      <div className="flex flex-1 items-center justify-end pr-[3px] text-[11px] text-[#eee]">
        <svg width="13" height="8" viewBox="0 0 13 8" fill="none" stroke="#eee"><path d="M.5 7.500l6-6 6 6" /></svg>
        <svg width="17" height="16" viewBox="0 0 17 16" className="ml-[9px]" fill="none" stroke="#eee"><path d="M.5 5.500h3l4-4v13l-4-4h-3zM10 5q2 3 0 6M12 3q3 5 0 10M14 1q5 7 0 14" /></svg>
        <svg width="16" height="10" viewBox="0 0 16 10" className="ml-[9px]" fill="none" stroke="#eee"><rect x=".5" y=".5" width="13" height="9" /><rect x="2" y="2" width="7" height="6" fill="#eee" /><path d="M15 3v4" /></svg>
        <span className="ml-[10px]">РУС</span>
        <div className="mr-[7px] ml-[10px] flex flex-col items-center leading-[19px]">
          <span>15:07</span>
          <span>29.05.2022</span>
        </div>
        <span className="h-[40px] w-px bg-[#666]" />
      </div>
    </div>
  );
}

export default function App() {
  return (
    <div className="flex h-[900px] w-[1600px] flex-col overflow-hidden bg-white [font-family:'Open_Sans',sans-serif]">
      <TitleBar />
      <TabRow />
      <Ribbon />
      <div className="flex min-h-0 flex-1">
        <ThumbPanel />
        <Editor />
      </div>
      <StatusBar />
      <Taskbar />
    </div>
  );
}
